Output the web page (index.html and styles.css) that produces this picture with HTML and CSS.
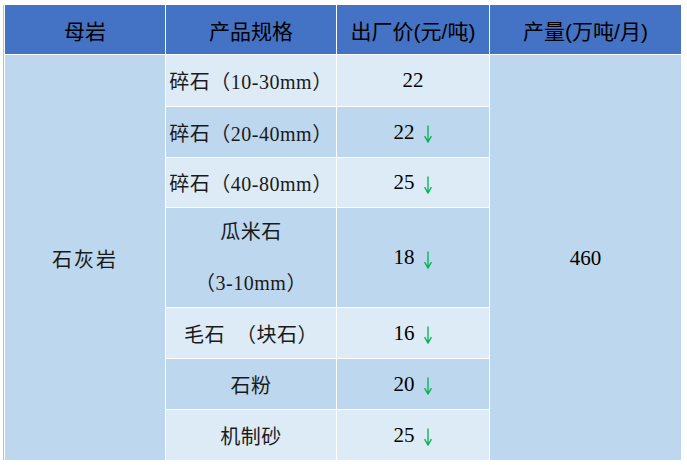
FILE: index.html
```html
<!DOCTYPE html>
<html lang="zh-CN">
<head>
<meta charset="utf-8">
<title>石灰岩产品价格</title>
<link rel="stylesheet" href="styles.css">
</head>
<body>
<div class="frame">
  <div class="grid">
    <div class="cell head">母岩</div>
    <div class="cell head">产品规格</div>
    <div class="cell head">出厂价(元/吨)</div>
    <div class="cell head">产量(万吨/月)</div>

    <div class="cell rock">石灰岩</div>
    <div class="cell output num">460</div>

    <div class="cell light spec">碎石（10-30mm）</div>
    <div class="cell light num">22</div>

    <div class="cell dark spec">碎石（20-40mm）</div>
    <div class="cell dark num">22<svg class="down" viewBox="0 0 10 18" width="10" height="18"><path d="M5 0.5V17M1.6 11.2L5 17L8.4 11.2"/></svg></div>

    <div class="cell light spec">碎石（40-80mm）</div>
    <div class="cell light num">25<svg class="down" viewBox="0 0 10 18" width="10" height="18"><path d="M5 0.5V17M1.6 11.2L5 17L8.4 11.2"/></svg></div>

    <div class="cell dark spec two"><span class="line">瓜米石</span><span class="line">（3-10mm）</span></div>
    <div class="cell dark num">18<svg class="down" viewBox="0 0 10 18" width="10" height="18"><path d="M5 0.5V17M1.6 11.2L5 17L8.4 11.2"/></svg></div>

    <div class="cell light spec">毛石&nbsp;&nbsp;（块石）</div>
    <div class="cell light num">16<svg class="down" viewBox="0 0 10 18" width="10" height="18"><path d="M5 0.5V17M1.6 11.2L5 17L8.4 11.2"/></svg></div>

    <div class="cell dark spec">石粉</div>
    <div class="cell dark num">20<svg class="down" viewBox="0 0 10 18" width="10" height="18"><path d="M5 0.5V17M1.6 11.2L5 17L8.4 11.2"/></svg></div>

    <div class="cell light spec">机制砂</div>
    <div class="cell light num">25<svg class="down" viewBox="0 0 10 18" width="10" height="18"><path d="M5 0.5V17M1.6 11.2L5 17L8.4 11.2"/></svg></div>
  </div>
</div>
</body>
</html>
```

FILE: styles.css
```css
html, body {
  margin: 0;
  padding: 0;
  background: #ffffff;
}

.frame {
  margin: 5px 0 0 3px;
  padding-left: 1px;
  border-left: 1px solid #a9c3e5;
  width: 676px;
}

.grid {
  display: grid;
  grid-template-columns: 160px 170px 152px 191px;
  grid-template-rows: 49px 51px 50px 49px 99px 50px 50px 50px;
  gap: 1px;
  background: #ffffff;
}

.cell {
  display: flex;
  align-items: center;
  justify-content: center;
  font-family: "Liberation Serif", "Noto Sans CJK SC", serif;
  font-size: 20px;
  color: #1a1a1a;
  white-space: nowrap;
}

.head {
  background: #4472c4;
  font-family: "Liberation Sans", "Noto Sans CJK SC", sans-serif;
  font-size: 21px;
  color: #000000;
}

.rock {
  grid-column: 1;
  grid-row: 2 / span 7;
  background: #bdd7ee;
  letter-spacing: 2px;
  padding-top: 2px;
}

.output {
  grid-column: 4;
  grid-row: 2 / span 7;
  background: #bdd7ee;
  padding-top: 2px;
}

.light {
  background: #ddebf7;
}

.dark {
  background: #bdd7ee;
}

.spec {
  letter-spacing: 0.5px;
}

.num {
  font-size: 21px;
  color: #000000;
}

.two {
  flex-direction: column;
}

.line {
  display: block;
  line-height: 51px;
  text-align: center;
}

.down {
  margin-left: 8px;
  margin-top: 4px;
  fill: none;
  stroke: #00b050;
  stroke-width: 1.3;
}
```
